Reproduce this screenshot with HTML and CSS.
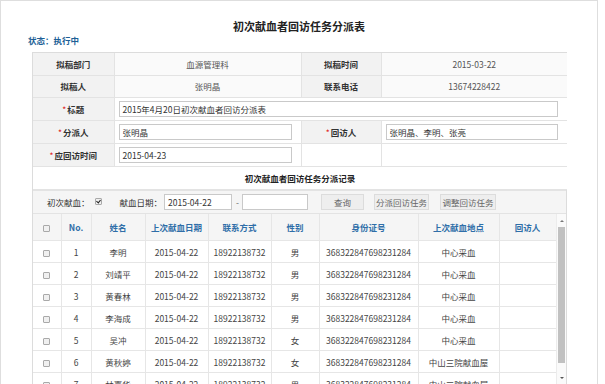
FILE: index.html
```html
<!DOCTYPE html>
<html lang="zh">
<head>
<meta charset="utf-8">
<title>初次献血者回访任务分派表</title>
<link rel="stylesheet" href="styles.css">
</head>
<body>
<div class="page">
  <h1 class="title">初次献血者回访任务分派表</h1>
  <div class="status">状态：执行中</div>
  <div class="sheet">
    <table class="form">
      <colgroup><col class="c1"><col class="c2"><col class="c3"><col class="c4"></colgroup>
      <tr class="r-info"><th>拟稿部门</th><td>血源管理科</td><th>拟稿时间</th><td>2015-03-22</td></tr>
      <tr class="r-info"><th>拟稿人</th><td>张明晶</td><th>联系电话</th><td>13674228422</td></tr>
      <tr class="r-in"><th><span class="req">*</span>标题</th><td colspan="3" class="in-cell"><div class="field">2015年4月20日初次献血者回访分派表</div></td></tr>
      <tr class="r-in"><th><span class="req">*</span>分派人</th><td class="in-cell"><div class="field">张明晶</div></td><th><span class="req">*</span>回访人</th><td class="in-cell"><div class="field">张明晶、李明、张亮</div></td></tr>
      <tr class="r-in"><th><span class="req">*</span>应回访时间</th><td class="in-cell"><div class="field">2015-04-23</div></td><th class="blank"></th><td></td></tr>
      <tr class="r-sec"><td colspan="4">初次献血者回访任务分派记录</td></tr>
    </table>
    <div class="filter">
      <span class="f-label">初次献血：</span>
      <span class="chk checked"></span>
      <span class="f-label f-date">献血日期：</span>
      <span class="field f-in1">2015-04-22</span>
      <span class="dash">-</span>
      <span class="field f-in2"></span>
      <span class="btn b-q">查询</span>
      <span class="btn b-a">分派回访任务</span>
      <span class="btn b-b">调整回访任务</span>
    </div>
    <div class="grid-wrap">
      <div class="grid-view">
        <table class="grid">
          <colgroup>
            <col class="g0"><col class="g1"><col class="g2"><col class="g3"><col class="g4"><col class="g5"><col class="g6"><col class="g7"><col class="g8">
          </colgroup>
          <tr class="g-head"><th><span class="chk"></span></th><th>No.</th><th>姓名</th><th>上次献血日期</th><th>联系方式</th><th>性别</th><th>身份证号</th><th>上次献血地点</th><th>回访人</th></tr>
          <tr><td><span class="chk"></span></td><td>1</td><td>李明</td><td>2015-04-22</td><td>18922138732</td><td>男</td><td>368322847698231284</td><td>中心采血</td><td></td></tr>
          <tr><td><span class="chk"></span></td><td>2</td><td>刘靖平</td><td>2015-04-22</td><td>18922138732</td><td>男</td><td>368322847698231284</td><td>中心采血</td><td></td></tr>
          <tr><td><span class="chk"></span></td><td>3</td><td>黄春林</td><td>2015-04-22</td><td>18922138732</td><td>男</td><td>368322847698231284</td><td>中心采血</td><td></td></tr>
          <tr><td><span class="chk"></span></td><td>4</td><td>李海成</td><td>2015-04-22</td><td>18922138732</td><td>男</td><td>368322847698231284</td><td>中心采血</td><td></td></tr>
          <tr><td><span class="chk"></span></td><td>5</td><td>吴冲</td><td>2015-04-22</td><td>18922138732</td><td>女</td><td>368322847698231284</td><td>中心采血</td><td></td></tr>
          <tr><td><span class="chk"></span></td><td>6</td><td>黄秋婷</td><td>2015-04-22</td><td>18922138732</td><td>女</td><td>368322847698231284</td><td>中山三院献血屋</td><td></td></tr>
          <tr><td><span class="chk"></span></td><td>7</td><td>林嘉华</td><td>2015-04-22</td><td>18922138732</td><td>男</td><td>368322847698231284</td><td>中山三院献血屋</td><td></td></tr>
        </table>
      </div>
      <div class="vscroll">
        <span class="arr up"></span>
        <span class="thumb"></span>
        <span class="track"></span>
        <span class="arr down"></span>
      </div>
    </div>
  </div>
</div>
</body>
</html>
```
FILE: styles.css
```css
html, body {
  margin: 0;
  padding: 0;
  height: 384px;
  overflow: hidden;
  background: #fff;
}
body {
  font-family: "Noto Sans CJK SC", "Open Sans", sans-serif;
  font-size: 8.5px;
  color: #333;
}
.page {
  box-sizing: border-box;
  width: 598px;
  height: 400px;
  border: 1px solid #dedede;
  padding: 17px 0 0 27px;
}
.title {
  margin: 0 0 0 -27px;
  text-align: center;
  font-size: 11px;
  line-height: 16px;
  font-weight: bold;
  color: #222;
}
.status {
  margin-top: 0;
  line-height: 12px;
  color: #1d5f96;
  font-weight: 600;
}
.sheet {
  width: 535px;
  margin: 6px 0 0 4px;
  border: 1px solid #dcdcdc;
  box-sizing: border-box;
}
.form {
  width: 100%;
  border-collapse: collapse;
  table-layout: fixed;
}
.form .c1 { width: 81px; }
.form .c2 { width: 187px; }
.form .c3 { width: 80px; }
.form .c4 { width: 186px; }
.form th, .form td {
  border: 1px solid #e3e3e3;
  padding: 0;
  text-align: center;
  vertical-align: middle;
}
.form tr:first-child th, .form tr:first-child td { border-top: none; }
.form th:first-child, .form td:first-child { border-left: none; }
.form th:last-child, .form td:last-child { border-right: none; }
.form th {
  background: #f2f2f2;
  font-weight: bold;
  color: #333;
}
.form td {
  background: #fff;
  color: #555;
}
.form .r-info td { background: #fafafa; }
.r-info { height: 22px; }
.r-in { height: 23px; }
.form th.blank { background: #fff; }
.req { color: #e02020; font-weight: normal; margin-right: 1px; }
.form td.in-cell {
  text-align: left;
  padding: 0 9px 0 4px;
}
.field {
  box-sizing: border-box;
  display: block;
  height: 16px;
  line-height: 14px;
  border: 1px solid #c9c9c9;
  background: #fff;
  padding: 0 3px;
  color: #333;
  font-size: 8.5px;
  text-align: left;
}
.r-sec { height: 23px; }
.form .r-sec td {
  font-weight: bold;
  color: #222;
  background: #fff;
}
.filter {
  display: flex;
  align-items: center;
  height: 24px;
  background: #f5f5f5;
  border-top: 1px solid #e3e3e3;
  border-bottom: 1px solid #e3e3e3;
  padding-left: 14px;
  box-sizing: border-box;
  color: #333;
}
.f-label { white-space: nowrap; }
.filter .chk { margin-left: 5px; }
.f-date { margin-left: 18px; }
.filter .field { display: inline-block; }
.f-in1 { width: 68px; margin-left: 2px; }
.dash { margin: 0 3px 0 4px; color: #666; }
.f-in2 { width: 66px; }
.btn {
  box-sizing: border-box;
  height: 16px;
  line-height: 14px;
  border: 1px solid #dcdcdc;
  background: #eeeeee;
  color: #666;
  text-align: center;
  white-space: nowrap;
}
.b-q { width: 43px; margin-left: 13px; }
.b-a { width: 55px; margin-left: 10px; }
.b-b { width: 56px; margin-left: 11px; }
.chk {
  display: inline-block;
  box-sizing: border-box;
  width: 7px;
  height: 7px;
  border: 1px solid #a9a9a9;
  background: #f0f0f0;
  border-radius: 1px;
  vertical-align: middle;
  position: relative;
}
.chk.checked::after {
  content: "";
  position: absolute;
  left: 1px;
  top: 0;
  width: 2px;
  height: 3px;
  border-right: 1px solid #222;
  border-bottom: 1px solid #222;
  transform: rotate(40deg);
}
.grid-wrap {
  display: flex;
  height: 180px;
}
.grid-view {
  flex: 1;
  overflow: hidden;
}
.grid {
  width: 100%;
  border-collapse: collapse;
  table-layout: fixed;
}
.g0 { width: 28px; }
.g1 { width: 30px; }
.g2 { width: 54px; }
.g3 { width: 63px; }
.g4 { width: 63px; }
.g5 { width: 48px; }
.g6 { width: 99px; }
.g7 { width: 81px; }
.g8 { width: 57px; }
.grid th, .grid td {
  border: 1px solid #e6e6e6;
  padding: 0;
  text-align: center;
  vertical-align: middle;
  white-space: nowrap;
  overflow: hidden;
}
.grid tr:first-child th { border-top: none; }
.grid th:first-child, .grid td:first-child { border-left: none; }
.grid th {
  background: #f5f5f5;
  color: #2f6ea8;
  font-weight: bold;
}
.grid tr { height: 22px; }
.grid tr.g-head { height: 27px; }
.grid td { color: #444; background: #fff; }
.vscroll {
  width: 10px;
  display: flex;
  flex-direction: column;
  align-items: center;
  background: #fafafa;
  border-left: 1px solid #ececec;
  padding-top: 6px;
  box-sizing: border-box;
}
.arr {
  width: 0;
  height: 0;
  border-left: 2px solid transparent;
  border-right: 2px solid transparent;
}
.arr.up { border-bottom: 2px solid #777; }
.arr.down { border-top: 2px solid #555; }
.thumb {
  margin-top: 5px;
  width: 7px;
  height: 136px;
  background: #c1c1c1;
}
.track { height: 14px; }
```
